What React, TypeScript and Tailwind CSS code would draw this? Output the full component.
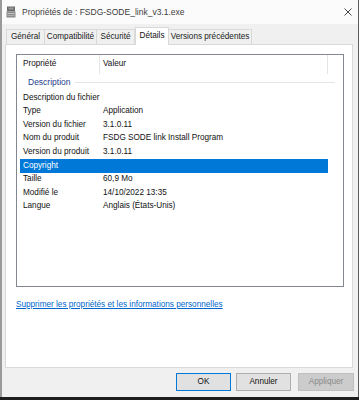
import React from 'react';

const rows = [
  { label: 'Description du fichier', value: '' },
  { label: 'Type', value: 'Application' },
  { label: 'Version du fichier', value: '3.1.0.11' },
  { label: 'Nom du produit', value: 'FSDG SODE link Install Program' },
  { label: 'Version du produit', value: '3.1.0.11' },
  { label: 'Copyright', value: '', selected: true },
  { label: 'Taille', value: '60,9 Mo' },
  { label: 'Modifié le', value: '14/10/2022 13:35' },
  { label: 'Langue', value: 'Anglais (États-Unis)' },
];

const tabs = [
  { label: 'Général', w: 'w-[39px]' },
  { label: 'Compatibilité', w: 'w-[53px]' },
  { label: 'Sécurité', w: 'w-[39px]' },
  { label: 'Détails', w: 'w-[34px]', active: true },
  { label: 'Versions précédentes', w: 'w-[84px]' },
];

function FileIcon() {
  return (
    <svg width="10" height="12" viewBox="0 0 10 12">
      <rect x="1" y="0.5" width="8" height="5" fill="#6b6b6b" />
      <rect x="2.5" y="1.5" width="5" height="2" fill="#9a9a9a" />
      <rect x="0.5" y="5.5" width="9" height="6" fill="#8c8c8c" />
      <rect x="1.5" y="7" width="7" height="1" fill="#c4c4c4" />
      <rect x="1.5" y="9" width="7" height="1" fill="#b0b0b0" />
    </svg>
  );
}

export default function App() {
  return (
    <div
      className="w-[359px] h-[400px] bg-[#1e1e1e] flex flex-col overflow-hidden text-[#111] text-[8.2px]"
      style={{ fontFamily: '"Liberation Sans", Arial, sans-serif' }}
    >
      <div className="h-[397px] bg-[#f0f0f0] border-l-2 border-l-[#9a9a9a] border-r border-r-[#5c5c5c] flex flex-col">
        {/* title bar */}
        <div className="h-[24px] bg-[#fbfbfb] flex items-center">
          <div className="ml-[4px] w-[10px] flex items-center">
            <FileIcon />
          </div>
          <span className="ml-[6px] text-[8.5px] text-[#3c3c3c]">Propriétés de : FSDG-SODE_link_v3.1.exe</span>
          <svg className="ml-auto mr-[6px]" width="8" height="8" viewBox="0 0 8 8">
            <path d="M0.5 0.5 L7.5 7.5 M7.5 0.5 L0.5 7.5" stroke="#333" strokeWidth="0.9" fill="none" />
          </svg>
        </div>

        {/* tabs */}
        <div className="h-[20px] flex items-end pl-[4px]">
          {tabs.map((t) =>
            t.active ? (
              <div
                key={t.label}
                className={`${t.w} h-[18px] -mb-px bg-white border border-b-0 border-[#d9d9d9] flex items-center justify-center relative z-10`}
              >
                {t.label}
              </div>
            ) : (
              <div
                key={t.label}
                className={`${t.w} h-[15px] bg-[#f0f0f0] border border-b-0 border-[#d9d9d9] -ml-px first:ml-0 flex items-center justify-center text-[#1a1a1a]`}
              >
                {t.label}
              </div>
            )
          )}
        </div>

        {/* panel */}
        <div className="ml-[3px] w-[348px] h-[324px] bg-white border border-[#d9d9d9] flex flex-col">
          <div className="ml-[10px] mt-[9px] w-[328px] h-[233px] border border-[#828790] flex flex-col">
            {/* header */}
            <div className="h-[19px] flex items-stretch shrink-0">
              <div className="w-[83px] pl-[6px] flex items-center border-r border-[#e5e5e5]">Propriété</div>
              <div className="w-[228px] pl-[3px] flex items-center border-r border-[#e5e5e5]">Valeur</div>
            </div>
            {/* group */}
            <div className="h-[16px] flex items-center pl-[11px] pr-[8px] shrink-0">
              <span className="text-[8.5px] text-[#1e3c8c]">Description</span>
              <div className="ml-[4px] flex-1 h-px bg-[#e5e5e5]" />
            </div>
            <div className="mt-px flex flex-col">
              {rows.map((r) => (
                <div
                  key={r.label}
                  className={`ml-[3px] w-[308px] h-[13.6px] flex items-center ${
                    r.selected ? 'bg-[#0078d7] text-white' : ''
                  }`}
                >
                  <div className="w-[83px] pl-[3px] whitespace-nowrap">{r.label}</div>
                  <div className="whitespace-nowrap">{r.value}</div>
                </div>
              ))}
            </div>
          </div>
          <div className="ml-[10px] mt-[13px] leading-[10px]">
            <span className="underline underline-offset-1 text-[#0066cc]">
              Supprimer les propriétés et les informations personnelles
            </span>
          </div>
        </div>

        {/* buttons */}
        <div className="mt-[5px] flex justify-end pr-[4px]">
          <button className="w-[55px] h-[18px] bg-[#e1e1e1] border border-[#0078d7] text-[8.2px]">OK</button>
          <button className="ml-[5px] w-[55px] h-[18px] bg-[#e1e1e1] border border-[#adadad] text-[8.2px]">
            Annuler
          </button>
          <button className="ml-[7px] w-[56px] h-[18px] bg-[#cccccc] border border-[#bfbfbf] text-[8.2px] text-[#8a8a8a]">
            Appliquer
          </button>
        </div>
      </div>
    </div>
  );
}
